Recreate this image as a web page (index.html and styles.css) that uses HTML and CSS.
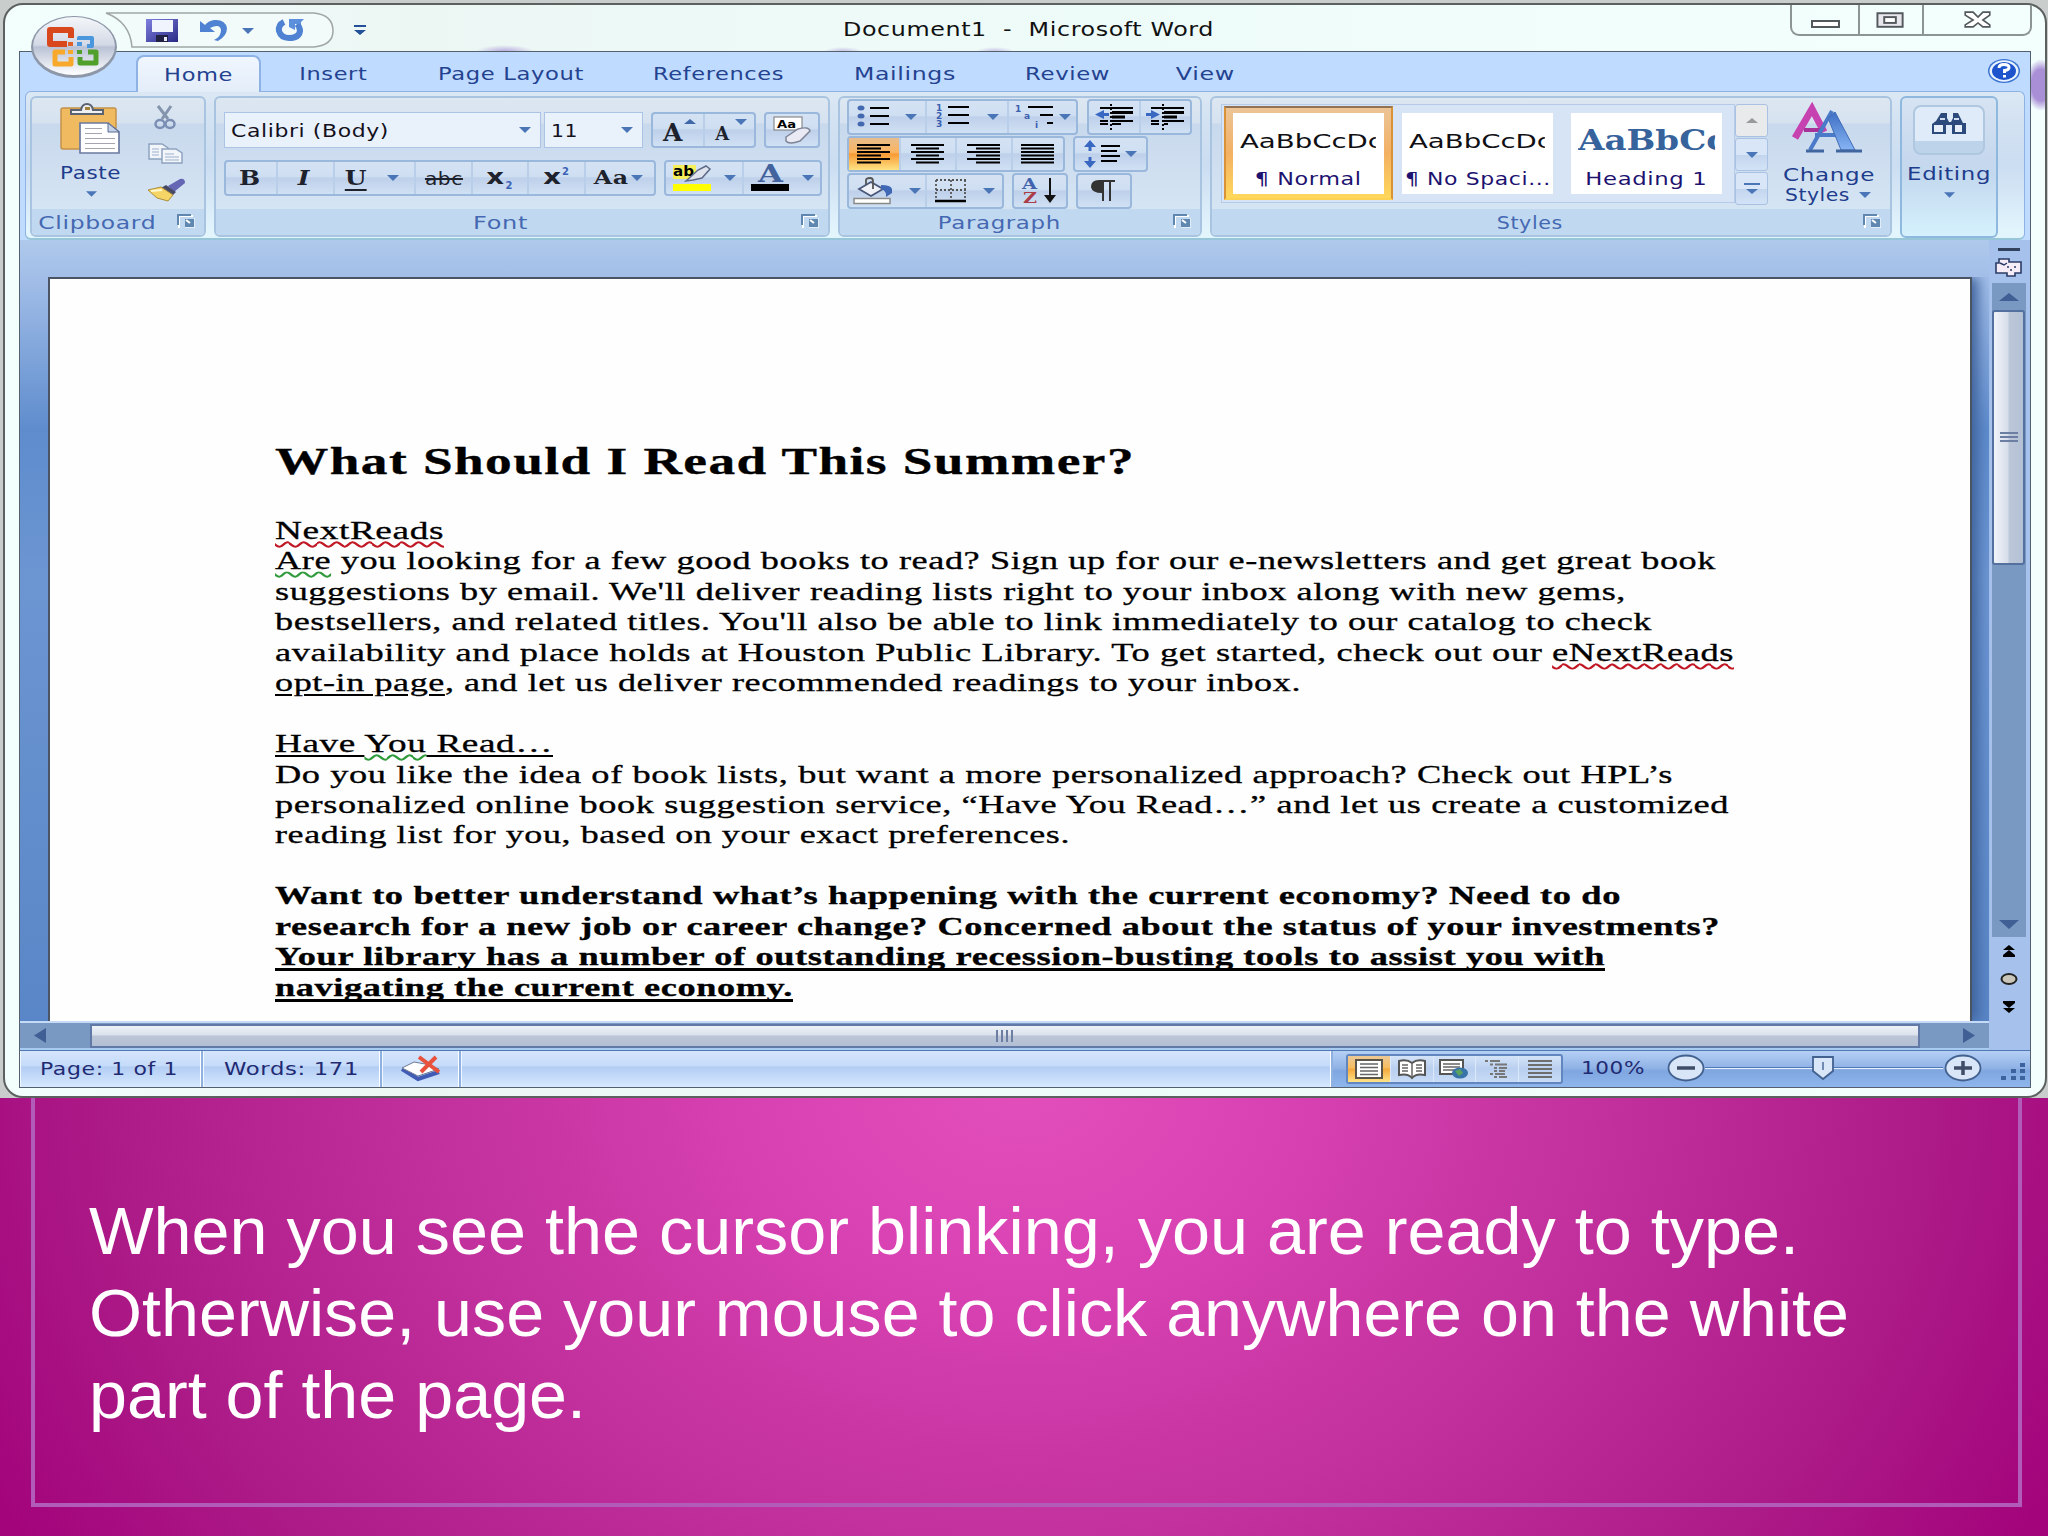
FILE: index.html
```html
<!DOCTYPE html>
<html lang="en">
<head>
    <meta charset="UTF-8">
    <title>Document1 - Microsoft Word</title>
    <link rel="stylesheet" href="styles.css">
</head>
<body>
    <svg class="defs" width="0" height="0">
        <defs>
            <linearGradient id="g-orb" x1="0" y1="0" x2="0" y2="1">
                <stop offset="0" stop-color="#f4f6f9"/><stop offset=".48" stop-color="#d3d9e6"/><stop offset=".52" stop-color="#b9c2d5"/><stop offset="1" stop-color="#ffffff"/>
            </linearGradient>
            <linearGradient id="g-save" x1="0" y1="0" x2="1" y2="1">
                <stop offset="0" stop-color="#7f7fe0"/><stop offset="1" stop-color="#2a2a86"/>
            </linearGradient>
            <linearGradient id="g-blueA" x1="0" y1="0" x2="0" y2="1">
                <stop offset="0" stop-color="#3f6fc4"/><stop offset="1" stop-color="#86b4f4"/>
            </linearGradient>
            <symbol id="down" viewBox="0 0 12 6"><path d="M0 0H12L6 6Z" fill="#4a76b8"/></symbol>
            <symbol id="launch" viewBox="0 0 18 14">
                <path d="M2 14V2H16" fill="none" stroke="#fff" stroke-width="2"/>
                <path d="M1 11V1H14" fill="none" stroke="#5f87b0" stroke-width="2"/>
                <path d="M8 5H17V13H8Z" fill="#5f87b0"/><path d="M9 6L13 9" stroke="#fff" stroke-width="2"/><path d="M18 4V14H8" fill="none" stroke="#fff"/>
            </symbol>
        </defs>
    </svg>

    <div class="window">
        <div class="titlebar">
            <svg class="office" width="90" height="66" viewBox="0 0 90 66">
                <ellipse cx="44" cy="33" rx="43" ry="31" fill="#8d97a8"/>
                <ellipse cx="44" cy="32" rx="41" ry="29" fill="url(#g-orb)"/>
                <g fill="none" stroke-linejoin="round">
                    <path d="M37 30H20V16H41V24" stroke="#d9481c" stroke-width="6"/>
                    <path d="M49 26V24H62V32H57" stroke="#4a97dd" stroke-width="4"/>
                    <path d="M41 43V50H25V38H35" stroke="#f8a92c" stroke-width="5"/>
                    <path d="M50 43V49H66V38H58" stroke="#52a02c" stroke-width="5"/>
                </g>
                <g><rect x="38" y="28" width="5" height="4" fill="#e0602c"/><rect x="47" y="28" width="5" height="4" fill="#4a97dd"/><rect x="38" y="36" width="5" height="4" fill="#f8a92c"/><rect x="47" y="36" width="5" height="4" fill="#52a02c"/></g>
            </svg>
            <div class="qat">
                <svg class="qat-shape" width="232" height="38" viewBox="0 0 232 38"><path d="M2 1H210Q229 3 229 19Q229 33 210 35H28Q26 10 2 1Z" fill="#f3fbfa" stroke="#a0a6a6" stroke-width="1.5"/></svg>
                <svg class="save" width="34" height="24" viewBox="0 0 34 24"><rect x="1" y="0" width="32" height="23" fill="url(#g-save)"/><rect x="7" y="1" width="21" height="12" fill="#f0f4fc"/><rect x="11" y="16" width="12" height="7" fill="#222244"/><rect x="19" y="18" width="3" height="4" fill="#e8e8f8"/></svg>
                <svg class="undo" width="30" height="24" viewBox="0 0 30 24"><path d="M1 2V13H16L11 9Q21 4 22 11Q22 18 15 21L19 22Q28 17 28 9Q26 0 15 1Q9 2 6 6Z" fill="#4f82d2"/></svg>
                <svg class="undo-arrow" width="12" height="6"><use href="#down"/></svg>
                <svg class="redo" width="30" height="24" viewBox="0 0 30 24"><path d="M9 3Q3 6 4 12Q6 19 14 19Q24 19 25 12Q25 8 22 5" fill="none" stroke="#4f82d2" stroke-width="6"/><path d="M14 0H29L26 3V5H20V11L14 8Z" fill="#5c8fdc"/></svg>
                <svg class="customize" width="12" height="11" viewBox="0 0 12 11"><path d="M0 0H12V2H0ZM0 5H12L6 10Z" fill="#24509a"/></svg>
            </div>
            <div class="title"><span class="t left" data-w="371">Document1 &nbsp;-&nbsp; Microsoft Word</span></div>
            <div class="captions">
                <svg width="66" height="31" viewBox="0 0 66 31"><rect x="20" y="16" width="27" height="6" fill="#fff" stroke="#53585c" stroke-width="2"/></svg>
                <svg width="64" height="31" viewBox="0 0 64 31"><rect x="18" y="8" width="26" height="14" fill="#e6e6ec" stroke="#53585c" stroke-width="2"/><rect x="25" y="12" width="12" height="6" fill="#fff" stroke="#53585c" stroke-width="2"/></svg>
                <svg width="108" height="31" viewBox="0 0 108 31"><path d="M42 7H50L55 12L60 7H67V10L60 15L67 20V22H60L55 18L50 22H42V20L50 15L42 10Z" fill="#fff" stroke="#53585c" stroke-width="1.7"/></svg>
            </div>
        </div>

        <div class="client">
            <div class="tabs">
                <div class="tab active w-home"><span class="t" data-w="69">Home</span></div>
                <div class="tab w-insert"><span class="t" data-w="68">Insert</span></div>
                <div class="tab w-layout"><span class="t" data-w="146">Page Layout</span></div>
                <div class="tab w-refs"><span class="t" data-w="131">References</span></div>
                <div class="tab w-mail"><span class="t" data-w="102">Mailings</span></div>
                <div class="tab w-review"><span class="t" data-w="85">Review</span></div>
                <div class="tab w-view"><span class="t" data-w="59">View</span></div>
                <svg class="help" width="34" height="26" viewBox="0 0 34 26"><ellipse cx="17" cy="13" rx="16" ry="12" fill="#3a73cf"/><ellipse cx="17" cy="13" rx="14.5" ry="10.7" fill="#eaf3ff"/><ellipse cx="17" cy="13" rx="12" ry="9" fill="#1f55cc"/><path d="M12 10Q12 6.500 17 6.500Q22 6.500 22 9.500Q22 12 17.500 12.500V15M17.500 17V19.500" fill="none" stroke="#fff" stroke-width="3"/></svg>
            </div>

            <div class="ribbon">
                <div class="group clipboard">
                    <div class="body">
                        <div class="paste">
                            <svg width="64" height="52" viewBox="0 0 64 52"><rect x="2" y="4" width="55" height="41" rx="2" fill="#f0bb60" stroke="#c4924a" stroke-width="1.500"/><path d="M12 10V6H22Q23 0 28 0Q33 0 34 6H44V10Z" fill="#eef0f4" stroke="#5b6270" stroke-width="2"/><rect x="26" y="3" width="5" height="3" fill="#a37f3c"/><path d="M21 19H49L60 28V49H21Z" fill="#fff" stroke="#6c7aa0" stroke-width="1.700"/><path d="M49 19V28H60Z" fill="#c6d2e8" stroke="#5a6a94"/><path d="M26 24.500H43M26 29.500H43M26 34.500H56M26 39.500H56M26 44.500H56" stroke="#a3a6ae"/></svg>
                            <div class="cap"><span class="t" data-w="61">Paste</span></div>
                            <svg class="arr" width="11" height="6"><use href="#down"/></svg>
                        </div>
                        <div class="clip-tools">
                            <svg width="36" height="24" viewBox="0 0 36 24"><path d="M10 0L20 13M23 0L14 13" stroke="#8494ac" stroke-width="3"/><ellipse cx="12" cy="18" rx="4.500" ry="4" fill="none" stroke="#7b8fb4" stroke-width="2.500"/><ellipse cx="22" cy="18" rx="4.500" ry="4" fill="none" stroke="#7b8fb4" stroke-width="2.500"/></svg>
                            <svg width="36" height="22" viewBox="0 0 36 22"><g fill="#f2f6fb" stroke="#8fa3c0" stroke-width="1.500"><path d="M1 1H14L20 5V16H1Z"/><path d="M14 6H28L34 10V20H14Z"/></g><path d="M4 6H11M4 9H11M4 12H11M17 11H26M17 14H31M17 17H31" stroke="#9db0cb"/></svg>
                            <svg width="38" height="24" viewBox="0 0 38 24"><path d="M20 8L32 1Q37 0 37 5L26 14Z" fill="#6566b4"/><path d="M18 7L28 14L25 17L13 10Z" fill="#474a66"/><path d="M13 9L25 17L20 23L9 20L0 12Z" fill="#f5d565" stroke="#ad8e3a"/><path d="M3 13L14 12" stroke="#fff8cf" stroke-width="2"/></svg>
                        </div>
                    </div>
                    <div class="label"><span class="t" data-w="118">Clipboard</span><svg class="launch" width="18" height="14"><use href="#launch"/></svg></div>
                </div>

                <div class="group font">
                    <div class="body">
                        <div class="row">
                            <div class="combo family"><span class="t left" data-w="158">Calibri (Body)</span><svg width="12" height="6"><use href="#down"/></svg></div>
                            <div class="combo size"><span class="t left" data-w="27">11</span><svg width="12" height="6"><use href="#down"/></svg></div>
                            <div class="set grow">
                                <div class="btn"><span class="serif s28">A</span><svg class="mark" width="12" height="6"><path d="M0 5H12L6 0Z" fill="#4068a8"/></svg></div>
                                <div class="btn"><span class="serif s20">A</span><svg class="mark" width="12" height="6"><use href="#down"/></svg></div>
                            </div>
                            <div class="set clear"><div class="btn"><svg width="38" height="28" viewBox="0 0 38 28"><rect x="1" y="1" width="28" height="13" fill="#fff" stroke="#777"/><text x="4" y="12" class="svg-aa" textLength="19" lengthAdjust="spacingAndGlyphs">Aa</text><path d="M13 21L25 13Q36 10 37 15L27 25Q16 29 13 25Z" fill="#e9eaf4" stroke="#7f8496" stroke-width="1.500"/></svg></div></div>
                        </div>
                        <div class="row">
                            <div class="set format">
                                <div class="btn w52"><span class="serif s22 wide">B</span></div>
                                <div class="btn w57"><span class="serif s22 wide italic">I</span></div>
                                <div class="btn w82"><span class="serif s22 wide under">U</span><svg width="12" height="6"><use href="#down"/></svg></div>
                                <div class="btn w57"><span class="t strike" data-w="38">abc</span></div>
                                <div class="btn w56"><span class="ex">x</span><span class="sub">2</span></div>
                                <div class="btn w57"><span class="ex">x</span><span class="sup">2</span></div>
                                <div class="btn w70"><span class="t serif s20" data-w="35">Aa</span><svg width="12" height="6"><use href="#down"/></svg></div>
                            </div>
                            <div class="set colors">
                                <div class="btn"><svg width="38" height="28" viewBox="0 0 38 28"><rect x="0" y="1" width="23" height="14" fill="#f5f05a"/><text x="0" y="12" class="svg-ab" textLength="21" lengthAdjust="spacingAndGlyphs">ab</text><path d="M13 17L25 6L33 2L37 5L29 14L20 16Z" fill="#dfe3ee" stroke="#5e6a88" stroke-width="1.500"/><rect x="0" y="20" width="38" height="7" fill="#ffff00"/></svg><svg width="12" height="6"><use href="#down"/></svg></div>
                                <div class="btn"><svg width="38" height="28" viewBox="0 0 38 28"><text x="7" y="18" class="svg-a" textLength="25" lengthAdjust="spacingAndGlyphs">A</text><rect x="0" y="20" width="38" height="7" fill="#000"/></svg><svg width="12" height="6"><use href="#down"/></svg></div>
                            </div>
                        </div>
                    </div>
                    <div class="label"><span class="t" data-w="55">Font</span><svg class="launch" width="18" height="14"><use href="#launch"/></svg></div>
                </div>

                <div class="group paragraph">
                    <div class="body">
                        <div class="row">
                            <div class="set lists">
                                <div class="btn w79"><svg width="32" height="24" viewBox="0 0 32 24"><g fill="#4569b0"><ellipse cx="4" cy="3" rx="3.500" ry="2.500"/><ellipse cx="4" cy="11" rx="3.500" ry="2.500"/><ellipse cx="4" cy="19" rx="3.500" ry="2.500"/></g><path d="M13 3H32M13 11H32M13 19H32" stroke="#000" stroke-width="2"/></svg><svg width="12" height="6"><use href="#down"/></svg></div>
                                <div class="btn w83"><svg width="36" height="26" viewBox="0 0 36 26"><g class="svg-num"><text x="1" y="7">1</text><text x="1" y="15">2</text><text x="1" y="23">3</text></g><path d="M13 3H34M13 11H34M13 19H34" stroke="#000" stroke-width="2"/></svg><svg width="12" height="6"><use href="#down"/></svg></div>
                                <div class="btn w69 tight"><svg width="40" height="26" viewBox="0 0 40 26"><g class="svg-num"><text x="0" y="8">1</text><text x="9" y="15">a</text><text x="20" y="24">i</text></g><path d="M13 3H38M25 11H38M32 19H38" stroke="#000" stroke-width="2"/></svg><svg width="12" height="6"><use href="#down"/></svg></div>
                            </div>
                            <div class="set indents">
                                <div class="btn"><svg width="38" height="26" viewBox="0 0 38 26"><path d="M16 0V26" stroke="#000" stroke-width="2" stroke-dasharray="2 2"/><path d="M5 4H38M5 20H13M17 17H38M5 17H13M17 20H26" stroke="#000" stroke-width="2"/><path d="M17 8.500H38" stroke="#000" stroke-width="3"/><path d="M17 13H30" stroke="#000" stroke-width="3"/><path d="M0 10.500L9 6V9H14V12H9V15Z" fill="#3968c2"/></svg></div>
                                <div class="btn"><svg width="38" height="26" viewBox="0 0 38 26"><path d="M17 0V26" stroke="#000" stroke-width="2" stroke-dasharray="2 2"/><path d="M5 4H38M5 20H13M18 17H38M5 17H13M18 20H22" stroke="#000" stroke-width="2"/><path d="M18 8.500H38" stroke="#000" stroke-width="3"/><path d="M18 13H31" stroke="#000" stroke-width="3"/><path d="M14 10.500L5 6V9H0V12H5V15Z" fill="#3968c2"/></svg></div>
                            </div>
                        </div>
                        <div class="row">
                            <div class="set aligns">
                                <div class="btn on w52"><svg width="34" height="20"><path d="M0 1H33M0 4.500H24M0 8H33M0 11.500H24M0 15H33M0 18.500H24" stroke="#000" stroke-width="1.800"/></svg></div>
                                <div class="btn w57"><svg width="34" height="20"><path d="M0 1H33M5 4.500H28M0 8H33M5 11.500H28M0 15H33M5 18.500H28" stroke="#000" stroke-width="1.800"/></svg></div>
                                <div class="btn w56"><svg width="34" height="20"><path d="M0 1H33M9 4.500H33M0 8H33M9 11.500H33M0 15H33M9 18.500H33" stroke="#000" stroke-width="1.800"/></svg></div>
                                <div class="btn w52"><svg width="34" height="20"><path d="M0 1H33M0 4.500H33M0 8H33M0 11.500H33M0 15H33M0 18.500H33" stroke="#000" stroke-width="1.800"/></svg></div>
                            </div>
                            <div class="set spacing"><div class="btn"><svg width="36" height="28" viewBox="0 0 36 28"><path d="M6 0L12 7H7.500V11H4.500V7H0ZM6 28L0 21H4.500V17H7.500V21H12Z" fill="#3968c2"/><path d="M17 6H36M17 11H33M17 16H36M17 21H33" stroke="#000" stroke-width="2"/></svg><svg width="12" height="6"><use href="#down"/></svg></div></div>
                        </div>
                        <div class="row">
                            <div class="set shade">
                                <div class="btn w79"><svg width="40" height="28" viewBox="0 0 40 28"><path d="M6 12L18 5L30 12L18 19Z" fill="#eef2f8" stroke="#49587a" stroke-width="1.800"/><path d="M13 8V3Q13 1 17 1Q20 1 20 4V12" fill="none" stroke="#555" stroke-width="1.800"/><path d="M28 8Q38 8 39 12V16L33 20Q34 14 28 12Z" fill="#3f67b6"/><rect x="1" y="21.500" width="36" height="5" fill="#fff" stroke="#8a8a8a" stroke-width="1.500"/></svg><svg width="12" height="6"><use href="#down"/></svg></div>
                                <div class="btn w77"><svg width="32" height="26" viewBox="0 0 32 26"><path d="M1 2H31M1 12H31M1 2V22M16 2V22M30 2V22" stroke="#555" stroke-width="1.800" stroke-dasharray="2 2"/><path d="M0 23H31" stroke="#000" stroke-width="2.500"/></svg><svg width="12" height="6"><use href="#down"/></svg></div>
                            </div>
                            <div class="set sort"><div class="btn"><svg width="38" height="28" viewBox="0 0 38 28"><text x="1" y="12" class="svg-s blue" textLength="15" lengthAdjust="spacingAndGlyphs">A</text><text x="2" y="26" class="svg-s red" textLength="14" lengthAdjust="spacingAndGlyphs">Z</text><path d="M29 1V22" stroke="#111" stroke-width="2"/><path d="M23 18H35L29 26Z" fill="#111"/></svg></div></div>
                            <div class="set pilcrow"><div class="btn"><svg width="26" height="22" viewBox="0 0 26 22"><path d="M24 1H8Q1 1 1 7Q2 12 11 12M12 1V21M19 1V21" fill="none" stroke="#333" stroke-width="2"/><path d="M12 1H8Q1 1 1 7Q2 12 12 12Z" fill="#333"/></svg></div></div>
                        </div>
                    </div>
                    <div class="label"><span class="t" data-w="123">Paragraph</span><svg class="launch" width="18" height="14"><use href="#launch"/></svg></div>
                </div>

                <div class="group styles">
                    <div class="body">
                        <div class="gallery">
                            <div class="style selected"><div class="sample"><span class="t left" data-w="143">AaBbCcDc</span></div><div class="name"><span class="t" data-w="107">¶ Normal</span></div></div>
                            <div class="style"><div class="sample"><span class="t left" data-w="143">AaBbCcDc</span></div><div class="name"><span class="t" data-w="146">¶ No Spaci...</span></div></div>
                            <div class="style"><div class="sample heading"><span class="t left" data-w="149">AaBbCc</span></div><div class="name"><span class="t" data-w="122">Heading 1</span></div></div>
                        </div>
                        <div class="gallery-nav">
                            <div class="off"><svg width="12" height="6"><path d="M0 5H12L6 0Z" fill="#999"/></svg></div>
                            <div><svg width="12" height="6"><use href="#down"/></svg></div>
                            <div><svg width="16" height="12"><path d="M0 1H16" stroke="#4a76b8" stroke-width="2"/><path d="M2 6H14L8 11Z" fill="#4a76b8"/></svg></div>
                        </div>
                        <div class="change">
                            <svg width="72" height="48" viewBox="0 0 72 48"><path d="M3 32L20 3L32 26" fill="none" stroke="#c542b0" stroke-width="7"/><path d="M12 24H30" stroke="#a83398" stroke-width="4"/><path d="M40 5L18 44M23 29H49" fill="none" stroke="#4a7ac8" stroke-width="4"/><path d="M36 12L43 6L63 44H49Z" fill="url(#g-blueA)" stroke="#416cb8"/><path d="M14 45H32M44 45H70" stroke="#41669f" stroke-width="3"/></svg>
                            <div class="cap"><span class="t" data-w="92">Change</span></div>
                            <div class="cap second"><span class="t left" data-w="65">Styles</span><svg width="12" height="6"><use href="#down"/></svg></div>
                        </div>
                    </div>
                    <div class="label"><span class="t" data-w="66">Styles</span><svg class="launch" width="18" height="14"><use href="#launch"/></svg></div>
                </div>

                <div class="group editing">
                    <div class="find"><svg width="36" height="23" viewBox="0 0 36 23"><path d="M10 1H16V6L18 10H20L22 6V1H27L32 11H35V22H21V13H15V22H1V12L5 9Z" fill="#2c4a7c"/><path d="M3 13H12V20H3ZM24 13H31V20H24Z" fill="#e6eefa"/><path d="M9 7H14M23 7H28" stroke="#cfdcf0" stroke-width="2"/></svg></div>
                    <div class="cap"><span class="t" data-w="84">Editing</span></div>
                    <svg class="arr" width="11" height="6"><use href="#down"/></svg>
                </div>
            </div>

            <div class="workspace">
                <div class="canvas">
                    <div class="page">
                        <h1><span class="t left" data-w="860">What Should I Read This Summer?</span></h1>
                        <p><span class="t left" data-w="169"><span class="bad">NextReads</span></span></p>
                        <p><span class="t left" data-w="1441"><span class="gram">Are</span> you looking for a few good books to read? Sign up for our e-newsletters and get great book</span></p>
                        <p><span class="t left" data-w="1351">suggestions by email. We'll deliver reading lists right to your inbox along with new gems,</span></p>
                        <p><span class="t left" data-w="1377">bestsellers, and related titles. You'll also be able to link immediately to our catalog to check</span></p>
                        <p><span class="t left" data-w="1459">availability and place holds at Houston Public Library. To get started, check out our <span class="bad">eNextReads</span></span></p>
                        <p><span class="t left" data-w="1026"><u>opt-in page</u>, and let us deliver recommended readings to your inbox.</span></p>
                        <p>&nbsp;</p>
                        <p><span class="t left" data-w="278"><u>Have </u><span class="gram">You</span><u> Read…</u></span></p>
                        <p><span class="t left" data-w="1398">Do you like the idea of book lists, but want a more personalized approach? Check out HPL’s</span></p>
                        <p><span class="t left" data-w="1454">personalized online book suggestion service, “Have You Read…” and let us create a customized</span></p>
                        <p><span class="t left" data-w="795">reading list for you, based on your exact preferences.</span></p>
                        <p>&nbsp;</p>
                        <p class="strong"><span class="t left" data-w="1346">Want to better understand what’s happening with the current economy? Need to do</span></p>
                        <p class="strong"><span class="t left" data-w="1445">research for a new job or career change? Concerned about the status of your investments?</span></p>
                        <p class="strong"><span class="t left" data-w="1330"><u>Your library has a number of outstanding recession-busting tools to assist you with</u></span></p>
                        <p class="strong"><span class="t left" data-w="518"><u>navigating the current economy.</u></span></p>
                    </div>
                    <div class="hscroll">
                        <svg class="harrow" width="12" height="15"><path d="M12 0V15L0 7.500Z" fill="#3f5f95"/></svg>
                        <div class="hthumb"></div>
                        <svg class="harrow" width="12" height="15"><path d="M0 0V15L12 7.500Z" fill="#3f5f95"/></svg>
                    </div>
                </div>
                <div class="vscroll">
                    <div class="split"></div>
                    <svg class="ruler" width="28" height="20" viewBox="0 0 28 20"><path d="M1 5H4V1H14V4H26V15H20V18H12V15H1Z" fill="#f6ecf8" stroke="#2b3b66" stroke-width="1.600"/><path d="M5 5L9 7L12 5M12 9H14M15 12H17M19 9H21" fill="none" stroke="#2b3b66" stroke-width="1.500"/></svg>
                    <div class="vtrack">
                        <svg width="20" height="8"><path d="M0 8H20L10 0Z" fill="#3f5f95"/></svg>
                        <div class="vthumb"></div>
                        <svg width="20" height="9"><path d="M0 0H20L10 9Z" fill="#3f5f95"/></svg>
                    </div>
                    <div class="browse">
                        <svg width="14" height="12" viewBox="0 0 14 12"><path d="M7 0L13 5H1ZM7 5L13 10H1ZM1 10H13V12H1Z"/></svg>
                        <svg width="18" height="12" viewBox="0 0 18 12"><ellipse cx="9" cy="6" rx="7.500" ry="5" fill="#c9c5b8" stroke="#222" stroke-width="2"/></svg>
                        <svg width="14" height="12" viewBox="0 0 14 12"><path d="M7 12L13 7H1ZM7 7L13 2H1ZM1 0H13V2H1Z"/></svg>
                    </div>
                </div>
            </div>

            <div class="status">
                <div class="cell c-page"><span class="t left" data-w="138">Page: 1 of 1</span></div>
                <div class="cell c-words"><span class="t left" data-w="135">Words: 171</span></div>
                <div class="cell c-proof"><svg width="40" height="26" viewBox="0 0 40 26"><path d="M1 14L17 24L38 17" fill="none" stroke="#3f5bb4" stroke-width="4"/><path d="M1 13L13 7L24 9L38 14L17 21Z" fill="#fff" stroke="#6d7894"/><path d="M18 2L38 17M35 2L20 17" stroke="#e8523c" stroke-width="4"/></svg></div>
                <div class="cell c-rest"></div>
                <div class="views">
                    <div class="on"><svg width="28" height="20"><path d="M1 1H27V19H1Z" fill="#fff" stroke="#5a5548" stroke-width="2"/><path d="M5 5H23M5 8.500H23M5 12H23M5 15.500H23" stroke="#666" stroke-width="1.500"/></svg></div>
                    <div><svg width="28" height="20"><path d="M1 2Q9 0 14 4Q19 0 27 2V16Q18 14 14 19Q10 14 1 16Z" fill="#fff" stroke="#555" stroke-width="2"/><path d="M14 4V18M4 6H10M4 9H10M4 12H10M18 6H24M18 9H24M18 12H24" stroke="#666" stroke-width="1.500"/></svg></div>
                    <div><svg width="30" height="20"><path d="M1 1H24V15H1Z" fill="#fff" stroke="#555" stroke-width="2"/><path d="M4 5H21M4 8H21M4 11H18" stroke="#666" stroke-width="1.500"/><ellipse cx="21" cy="14" rx="8" ry="5.500" fill="#3974a8"/><path d="M16 12L21 10L24 14L20 17Z" fill="#5aa35c"/></svg></div>
                    <div><svg width="24" height="18"><path d="M0 1H3M5 1H15M5 4.500H8M10 4.500H22M9 8H12M14 8H22M9 11H12M14 11H20M5 14H8M10 14H20M9 17H12M14 17H22" stroke="#777" stroke-width="1.800"/></svg></div>
                    <div><svg width="24" height="18"><path d="M0 1H24M0 5H24M0 9H24M0 13H24M0 17H24" stroke="#6e6e6e" stroke-width="1.800"/></svg></div>
                </div>
                <div class="percent"><span class="t left" data-w="64">100%</span></div>
                <svg class="zoom" width="316" height="30" viewBox="0 0 316 30">
                    <path d="M38 14.500H276" stroke="#4f78b8"/><path d="M38 15.500H276" stroke="#e6f0ff"/>
                    <g fill="#d9e6f8" stroke="#43618f" stroke-width="1.800"><ellipse cx="19" cy="15" rx="17.500" ry="12.500"/><ellipse cx="296" cy="15" rx="17.500" ry="12.500"/><path d="M146 4H166V18L156 26L146 18Z"/></g>
                    <path d="M10 15H28M287 15H305M296 8V22" stroke="#3f4d66" stroke-width="3.500"/><path d="M156 9V17" stroke="#7089b4" stroke-width="2"/>
                </svg>
                <svg class="grip" width="26" height="20"><path d="M21 1h5v4h-5zM12 7h5v4h-5zM21 7h5v4h-5zM2 14h5v4h-5zM12 14h5v4h-5zM21 14h5v4h-5z" fill="#3d639f"/></svg>
            </div>
        </div>
    </div>

    <div class="caption">
        <div><span class="t left" data-w="1710">When you see the cursor blinking, you are ready to type.</span></div>
        <div><span class="t left" data-w="1760">Otherwise, use your mouse to click anywhere on the white</span></div>
        <div><span class="t left" data-w="497">part of the page.</span></div>
    </div>

    <script>
        // stretch every label to its own width
        document.querySelectorAll('.t').forEach(function (el) {
            const natural = el.getBoundingClientRect().width;
            el.style.transform = 'scaleX(' + el.dataset.w / natural + ')';
        });
    </script>
</body>
</html>
```

FILE: styles.css
```css
* {
    box-sizing: border-box;
}

body {
    margin: 0;
    width: 2048px;
    height: 1536px;
    overflow: hidden;
    font-family: "DejaVu Sans", sans-serif;
    font-size: 18px;
    color: #1e3c8c;
    background:
        linear-gradient(#c9cdcc, #c9cdcc) top / 100% 1098px no-repeat,
        radial-gradient(ellipse 1150px 920px at 1020px 1080px, #e24fbb 0%, #d942b3 22%, #c2319d 50%, #ac1a87 80%, #a3047b 100%);
}

svg {
    display: block;
    flex: none;
    overflow: visible;
}

.defs {
    position: absolute;
}

.t {
    display: inline-block;
    white-space: nowrap;
    transform-origin: center;
    letter-spacing: 0.5px;
}

.t.left {
    transform-origin: left;
}

/* window frame */
.window {
    width: 2044px;
    height: 1095px;
    margin: 3px 0 0 3px;
    padding: 0 13px 0 14px;
    border: 2px solid #5c605f;
    border-radius: 20px;
    background:
        radial-gradient(ellipse 16px 26px at 2036px 80px, #a98fd6 60%, transparent) no-repeat,
        radial-gradient(ellipse 30px 7px at 500px 47px, #b3a4dc, transparent) no-repeat,
        radial-gradient(ellipse 20px 5px at 838px 47px, #c2b8e4, transparent) no-repeat,
        radial-gradient(ellipse 20px 5px at 990px 47px, #c2b8e4, transparent) no-repeat,
        linear-gradient(90deg, #f3fffd, #ecf7f4 20%, #eefcf9 55%, #f3fffd);
}

.titlebar {
    position: relative;
    display: flex;
    height: 46px;
}

.office {
    position: absolute;
    left: 11px;
    top: 9px;
    z-index: 2;
}

.qat {
    position: relative;
    display: flex;
    width: 733px;
    margin-left: 91px;
    padding: 14px 0 0 35px;
}

.qat-shape {
    position: absolute;
    left: -6px;
    top: 7px;
}

.qat .save, .qat .undo, .qat .redo, .undo-arrow {
    position: relative;
}

.undo { margin-left: 20px; }
.undo-arrow { margin: 9px 0 0 13px; }
.redo { margin-left: 21px; }
.customize { margin: 6px 0 0 49px; }

.title {
    flex: 1;
    padding-top: 11px;
    font-size: 20px;
    line-height: 26px;
    color: #111;
}

.captions {
    display: flex;
    height: 31px;
    border: 2px solid #8d9494;
    border-top: 0;
    border-radius: 0 0 9px 9px;
}

.captions svg + svg {
    border-left: 2px solid #8d9494;
}

.client {
    display: flex;
    flex-direction: column;
    width: 2012px;
    height: 1037px;
    border: 1px solid #55606e;
    background: #bfdbff;
}

/* tabs */
.tabs {
    display: flex;
    height: 39px;
    padding: 3px 0 0 116px;
}

.tab {
    display: flex;
    align-items: center;
    justify-content: center;
    color: #23428f;
}

.tab.active {
    z-index: 1;
    height: 37px;
    background: linear-gradient(#f0f6fe, #e3edf9);
    border: 2px solid #8db2e3;
    border-bottom: 0;
    border-radius: 8px 8px 0 0;
}

.w-home { width: 125px; }
.w-insert { width: 144px; }
.w-layout { width: 212px; }
.w-refs { width: 204px; }
.w-mail { width: 168px; }
.w-review { width: 157px; }
.w-view { width: 118px; }

.help {
    margin: 3px 9px 0 auto;
}

/* ribbon */
.ribbon {
    display: flex;
    gap: 8px;
    height: 149px;
    margin: 0 5px;
    padding: 4px 0 0 4px;
    border: 1px solid #8db2e3;
    border-bottom: 2px solid #97c6d8;
    border-radius: 6px;
    background: linear-gradient(#dbe8f4, #d3e2f2 20%, #cbddf1 50%, #e2f4fc 95%);
}

.group {
    display: flex;
    flex-direction: column;
    height: 141px;
    border: 2px solid #a9c4e0;
    border-radius: 6px;
    background: linear-gradient(#dce7f1, #d6e2f0 18%, #c9d9ed 19%, #d8e8f5 100%);
    overflow: hidden;
}

.group .body {
    flex: 1;
}

.label {
    position: relative;
    height: 26px;
    padding-right: 42px;
    line-height: 27px;
    text-align: center;
    color: #4568b2;
    background: #c1d9f0;
}

.launch {
    position: absolute;
    right: 9px;
    top: 5px;
}

.clipboard { width: 176px; }
.font { width: 616px; }
.paragraph { width: 364px; }
.styles { width: 682px; }
.editing { width: 98px; }

.cap {
    height: 22px;
    line-height: 22px;
    text-align: center;
}

.clipboard .body {
    display: flex;
}

.paste {
    display: flex;
    flex-direction: column;
    align-items: center;
    width: 116px;
    padding: 6px 0 0 2px;
}

.paste .cap { margin-top: 6px; }
.arr { margin-top: 7px; }

.clip-tools {
    display: flex;
    flex-direction: column;
    gap: 13px;
    padding-top: 8px;
}

.row {
    display: flex;
}

.set, .btn {
    display: flex;
    align-items: center;
    justify-content: center;
}

.set {
    height: 36px;
    border: 2px solid #9ab7dc;
    border-radius: 4px;
    background: linear-gradient(#d4e2f3, #cfdff2 45%, #bed0ea 50%, #d0e1f4);
}

.btn {
    position: relative;
    flex: 1;
    height: 100%;
    gap: 16px;
    color: #1d222c;
}

.btn + .btn {
    border-left: 2px solid #b9cee8;
}

.btn.on {
    background: linear-gradient(#e8bd8c, #fbb45f 45%, #f79a35 50%, #ffe383);
}

.w52 { flex: 52; }
.w56 { flex: 56; }
.w57 { flex: 57; }
.w69 { flex: 69; }
.w70 { flex: 70; gap: 6px; }
.w77 { flex: 77; }
.w79 { flex: 79; }
.w82 { flex: 82; gap: 22px; }
.w83 { flex: 83; }
.tight { gap: 4px; }

/* font group */
.font .row {
    padding: 14px 0 0 8px;
}

.font .row + .row {
    padding-top: 12px;
}

.combo {
    display: flex;
    align-items: center;
    justify-content: space-between;
    height: 36px;
    padding: 0 9px 0 6px;
    border: 1px solid #abc3e4;
    background: #e9f1fb;
    color: #14101c;
}

.family { width: 317px; margin-right: 3px; }
.size { width: 99px; margin-right: 8px; }
.grow { width: 105px; }
.clear { width: 56px; margin-left: 8px; }
.format { width: 432px; }
.colors { width: 158px; margin-left: 8px; }
.colors .btn { gap: 13px; }

.serif {
    font-family: "DejaVu Serif", serif;
    font-weight: bold;
    line-height: 26px;
}

.s28 { font-size: 25px; padding: 5px 10px 0 0; }
.s20 { font-size: 18px; }
.s22 { font-size: 20px; }
.grow .s20 { padding: 7px 14px 0 0; }

.wide { transform: scaleX(1.25); margin-left: -4px; }
.italic { font-style: italic; }

.under {
    text-decoration: underline 2px;
    text-underline-offset: 4px;
}

.mark {
    position: absolute;
    right: 7px;
    top: 5px;
}

.strike {
    text-decoration: line-through 2px;
}

.ex {
    font-weight: bold;
    font-size: 22px;
    line-height: 22px;
    padding-bottom: 2px;
    transform: scaleX(1.25);
}

.sub, .sup {
    margin-left: -13px;
    font-size: 10px;
    font-weight: bold;
    color: #3c62b8;
}

.sub { padding-top: 14px; }
.sup { padding-bottom: 14px; }

.svg-aa { font: bold 11px "DejaVu Sans", sans-serif; }
.svg-ab { font: bold 14px "DejaVu Sans", sans-serif; }
.svg-a { font: bold 24px "DejaVu Serif", serif; fill: #43639f; }
.svg-num { font: bold 9px "DejaVu Sans", sans-serif; fill: #3c5fb0; }
.svg-s { font: bold 15px "DejaVu Serif", serif; }
.blue { fill: #4163ae; }
.red { fill: #ab3d48; }

/* paragraph group */
.paragraph .row {
    padding: 1px 0 0 7px;
}

.lists { width: 231px; }
.indents { width: 105px; margin-left: 9px; }
.aligns { width: 218px; }
.spacing { width: 75px; margin-left: 8px; }
.spacing .btn { gap: 5px; }
.shade { width: 157px; }
.sort { width: 56px; margin-left: 8px; }
.pilcrow { width: 56px; margin-left: 8px; }

/* styles group */
.styles .body {
    display: flex;
    padding: 6px 0 0 9px;
}

.gallery {
    display: flex;
    width: 515px;
    height: 99px;
    border: 1px solid #b6cbe8;
    background: #d6e4f6;
}

.style {
    width: 169px;
    height: 94px;
    margin-top: 1px;
    padding: 7px 9px;
}

.style.selected {
    margin-left: 2px;
    border: 2px solid #d99238;
    border-top-color: #927250;
    border-bottom-color: #fbd254;
    padding: 5px 7px;
    background: linear-gradient(#ecc497, #f3b063 50%, #ffd85b);
}

.sample {
    height: 46px;
    padding: 15px 0 0 7px;
    line-height: 26px;
    color: #0f0f14;
    background: #fff;
    font-size: 20px;
}

.sample .t {
    letter-spacing: 0;
    clip-path: inset(0 5% 0 0);
}

.heading {
    font-family: "DejaVu Serif", serif;
    font-weight: bold;
    font-size: 28px;
    color: #37639c;
}

.heading .t {
    clip-path: inset(0 8% 0 0);
}

.name {
    display: flex;
    justify-content: center;
    height: 35px;
    padding-top: 8px;
    line-height: 24px;
    color: #1d1270;
    background: #fff;
}

.gallery-nav {
    display: flex;
    flex-direction: column;
    width: 33px;
    gap: 1px;
}

.gallery-nav div {
    display: flex;
    align-items: center;
    justify-content: center;
    height: 33px;
    border: 1px solid #a9c1e2;
    border-radius: 3px;
    background: linear-gradient(#d9e6f7 50%, #c3d5ee 50%, #d3e3f6);
}

.gallery-nav .off {
    background: #e9eaeb;
}

.change {
    width: 122px;
}

.change > svg {
    margin: 2px 0 0 24px;
}

.change .cap { margin-top: 10px; height: 20px; }

.change .second {
    display: flex;
    align-items: center;
    justify-content: space-between;
    margin: 0;
    padding: 2px 19px 0 17px;
}

/* editing group */
.editing {
    align-items: center;
    height: 142px;
    border-color: #8fb8de;
    background: linear-gradient(#d6e3f2, #c6d8ee 45%, #c3d8ee 55%, #d5f1fd);
}

.find {
    display: flex;
    justify-content: center;
    width: 72px;
    height: 50px;
    margin-top: 7px;
    padding-top: 5px;
    border: 2px solid #b0c7e0;
    border-radius: 8px;
    background: linear-gradient(#dfebf8 75%, #bdd3ea 75%);
}

.editing .cap { margin-top: 8px; }

/* document */
.workspace {
    display: flex;
    height: 810px;
    background: linear-gradient(#afc9ec, #a2bee8 38px, #5e8ccd 190px, #6c96d2 340px, #5885c6);
}

.canvas {
    width: 1969px;
}

.page {
    width: 1924px;
    height: 744px;
    margin: 37px 0 0 28px;
    padding: 160px 0 0 225px;
    border: 2px solid #4b5463;
    border-bottom: 0;
    background: #fefefe;
    box-shadow: 6px 0 12px #3f629b;
    clip-path: inset(0 -18px 0 0);
    font-family: "Liberation Serif", serif;
    font-size: 25px;
    color: #000;
    -webkit-text-stroke: 0.3px #000;
}

.page .t {
    letter-spacing: 0.4px;
}

.page h1 {
    height: 45px;
    margin: 0 0 32px;
    font-size: 37px;
    line-height: 45px;
}

.page h1 .t {
    letter-spacing: 1px;
}

.page p {
    height: 30.45px;
    margin: 0;
    line-height: 30px;
}

.page u {
    text-decoration: underline 2px;
    text-underline-offset: 3px;
}

.strong {
    font-weight: bold;
}

.page .strong u {
    text-decoration-thickness: 3px;
    text-decoration-skip-ink: none;
}

.bad {
    text-decoration: underline wavy #c01824 1.7px;
    text-decoration-skip-ink: none;
    text-underline-offset: 2px;
}

.gram {
    text-decoration: underline wavy #2f9b3b 1.5px;
    text-decoration-skip-ink: none;
    text-underline-offset: 2px;
}

.hscroll {
    display: flex;
    align-items: center;
    height: 29px;
    border-top: 2px solid #c5daf6;
    border-bottom: 2px solid #a8cbf2;
    background: #7998c2;
    padding: 0 14px;
}

.hthumb {
    width: 1831px;
    height: 24px;
    margin: 0 43px 0 44px;
    border: 2px solid #6079a6;
    background:
        repeating-linear-gradient(90deg, #6c7fa3 0 2px, transparent 2px 5px) center / 18px 12px no-repeat,
        linear-gradient(#eef2f8, #dbe1ec 45%, #bbc5d7 50%, #b3bfd4);
}

.vscroll {
    display: flex;
    flex-direction: column;
    align-items: center;
    width: 41px;
    background: #a5c1ec;
    padding-right: 2px;
}

.split {
    width: 22px;
    height: 3px;
    margin-top: 8px;
    background: #33435f;
}

.ruler {
    margin: 7px 0 5px;
}

.vtrack {
    display: flex;
    flex-direction: column;
    align-items: center;
    width: 34px;
    height: 654px;
    padding: 10px 0 8px;
    background: #7998c2;
}

.vtrack svg:last-child {
    margin-top: auto;
}

.vthumb {
    width: 33px;
    height: 255px;
    margin-top: 9px;
    border: 2px solid #53709f;
    border-radius: 3px;
    background:
        repeating-linear-gradient(#6c7fa3 0 2px, transparent 2px 4px) center / 18px 12px no-repeat,
        linear-gradient(90deg, #f0f3f9, #d7deea 48%, #bcc7d9 52%, #b4c0d4);
}

.browse {
    display: flex;
    flex-direction: column;
    align-items: center;
    gap: 16px;
    padding-top: 8px;
}

/* status bar */
.status {
    display: flex;
    height: 37px;
    border-top: 1px solid #5177b5;
    background: linear-gradient(#b5d0f5, #8db0e4 50%, #7fa6df 55%, #8fb6ec);
}

.cell {
    display: flex;
    align-items: center;
    padding-bottom: 2px;
    border-right: 2px solid #8fb1e2;
    box-shadow: inset -1px 0 #fff, inset 1px 0 #f1f7ff;
    color: #1f2a72;
    background: linear-gradient(#d5e5fb, #c6dcfa 40%, #b3cdf3 45%, #d6e9ff);
}

.c-page { width: 183px; padding-left: 20px; }
.c-words { width: 179px; padding-left: 21px; }
.c-proof { width: 79px; padding-left: 19px; }
.c-rest { width: 872px; }

.views {
    display: flex;
    width: 217px;
    height: 30px;
    margin: 3px 0 0 13px;
    border: 2px solid #6286c0;
    border-radius: 3px;
    background: linear-gradient(#d3e3f8, #b9cfef 50%, #c8dcf6);
}

.views div {
    display: flex;
    flex: 1;
    align-items: center;
    justify-content: center;
}

.views div + div {
    border-left: 1px solid #dce9fa;
}

.views .on {
    background: linear-gradient(#ecc896, #f6bd61 45%, #f3a83c 50%, #ffe38a);
}

.percent {
    width: 104px;
    padding-left: 18px;
    line-height: 34px;
    color: #1f2a72;
}

.zoom {
    margin-top: 2px;
}

.grip {
    margin: 11px 0 0 16px;
}

/* slide caption under the window */
.caption {
    width: 1991px;
    height: 409px;
    margin-left: 31px;
    padding: 92px 0 0 54px;
    border: 4px solid #b15cb8;
    border-top: 0;
    font-family: "Liberation Sans", sans-serif;
    font-size: 67px;
    line-height: 82px;
    color: #fff;
}

.caption .t {
    letter-spacing: 0;
}
```
